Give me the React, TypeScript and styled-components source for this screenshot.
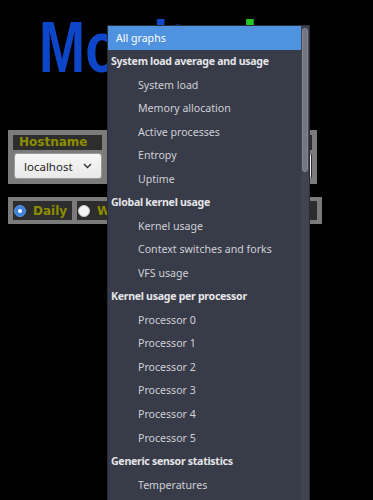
import React from "react";
import styled, { createGlobalStyle } from "styled-components";

const GlobalStyle = createGlobalStyle`
  html, body {
    margin: 0;
    padding: 0;
    background: #000000;
    overflow: hidden;
  }
  body {
    font-family: "DejaVu Sans", sans-serif;
  }
`;

const Page = styled.div`
  position: relative;
  width: 373px;
  height: 500px;
  overflow: hidden;
  background: #000000;
  padding-top: 11px;
  box-sizing: border-box;
`;

const Title = styled.h1`
  margin: 0 0 0 39px;
  height: 72px;
  font-family: "Liberation Sans", Arial, sans-serif;
  font-weight: 700;
  font-size: 72px;
  line-height: 72px;
  color: #0d46c8;
  white-space: nowrap;
  transform: scaleX(0.77);
  transform-origin: left top;
`;

const Accent = styled.span`
  color: #22c522;
`;

const Panel = styled.div<{ $top: number; $width: number; $py: number }>`
  margin: ${(p) => p.$top}px 0 0 8px;
  width: ${(p) => p.$width}px;
  box-sizing: border-box;
  padding: ${(p) => p.$py}px 5px;
  background: #7b7b7b;
  display: flex;
  gap: 5px;
`;

const Column = styled.div<{ $width?: number }>`
  display: flex;
  flex-direction: column;
  gap: 3px;
  width: ${(p) => (p.$width ? `${p.$width}px` : "auto")};
  flex: ${(p) => (p.$width ? "none" : "1")};
`;

const Label = styled.div`
  height: 15px;
  background: #2d2d2d;
  color: #8d8d00;
  font-family: "DejaVu Sans", sans-serif;
  font-weight: 700;
  font-size: 12px;
  line-height: 15px;
  padding-left: 6px;
`;

const SelectBox = styled.div<{ $hidden?: boolean }>`
  height: 26px;
  margin-left: 1px;
  box-sizing: border-box;
  border: 1px solid #9a9a9a;
  border-radius: 3px;
  background: linear-gradient(#f6f6f6, #e9e9e9);
  display: flex;
  align-items: center;
  justify-content: space-between;
  padding: 0 9px 0 9px;
  font-family: "Noto Sans", sans-serif;
  font-size: 11.5px;
  color: #222222;
  border-right-color: ${(p) => (p.$hidden ? "#2e2e2e" : "#9a9a9a")};
`;

const RadioCell = styled.label<{ $grow?: boolean }>`
  height: 19px;
  background: #2d2d2d;
  display: flex;
  align-items: center;
  gap: 7px;
  padding: 0 5px 0 1px;
  flex: ${(p) => (p.$grow ? "1" : "none")};
  color: #8d8d00;
  font-family: "DejaVu Sans", sans-serif;
  font-weight: 700;
  font-size: 12px;
`;

const RadioDot = styled.span<{ $checked?: boolean }>`
  width: 12px;
  height: 12px;
  border-radius: 50%;
  box-sizing: border-box;
  flex: none;
  position: relative;
  background: ${(p) => (p.$checked ? "#3f82dc" : "#f5f5f5")};
  border: 1px solid ${(p) => (p.$checked ? "#5b95e0" : "#c9c9c9")};
  &::after {
    content: "";
    display: ${(p) => (p.$checked ? "block" : "none")};
    position: absolute;
    left: 3px;
    top: 3px;
    width: 4px;
    height: 4px;
    border-radius: 50%;
    background: #ffffff;
  }
`;

const Menu = styled.div`
  position: absolute;
  left: 107px;
  top: 25px;
  width: 203px;
  height: 480px;
  box-sizing: border-box;
  border: 1px solid #2a2c35;
  background: #383b48;
  display: flex;
  z-index: 10;
`;

const List = styled.ul`
  list-style: none;
  margin: 0;
  padding: 0;
  flex: 1;
  font-family: "Noto Sans", sans-serif;
  font-size: 10.6px;
`;

const Item = styled.li<{ $kind: "top" | "group" | "child"; $active?: boolean }>`
  height: 23.53px;
  display: flex;
  align-items: center;
  white-space: nowrap;
  padding-left: ${(p) => (p.$kind === "top" ? 8 : p.$kind === "group" ? 3 : 30)}px;
  font-weight: ${(p) => (p.$kind === "group" ? 700 : 400)};
  letter-spacing: ${(p) => (p.$kind === "group" ? "-0.3px" : "0")};
  color: ${(p) => (p.$active ? "#ffffff" : p.$kind === "group" ? "#e4e5e8" : "#cfd1d7")};
  background: ${(p) => (p.$active ? "#4f92e0" : "transparent")};
`;

const Track = styled.div`
  width: 8px;
  background: #41444f;
  padding: 2px 1px 0 1px;
  box-sizing: border-box;
`;

const Thumb = styled.div`
  height: 144px;
  border-radius: 3px;
  background: #727684;
  border: 1px solid #838794;
  box-sizing: border-box;
`;

const Chevron = () => (
  <svg width="9" height="6" viewBox="0 0 9 6">
    <polyline points="1,1 4.5,4.5 8,1" fill="none" stroke="#333" strokeWidth="1.4" />
  </svg>
);

type Entry = { text: string; kind: "top" | "group" | "child"; active?: boolean };

const entries: Entry[] = [
  { text: "All graphs", kind: "top", active: true },
  { text: "System load average and usage", kind: "group" },
  { text: "System load", kind: "child" },
  { text: "Memory allocation", kind: "child" },
  { text: "Active processes", kind: "child" },
  { text: "Entropy", kind: "child" },
  { text: "Uptime", kind: "child" },
  { text: "Global kernel usage", kind: "group" },
  { text: "Kernel usage", kind: "child" },
  { text: "Context switches and forks", kind: "child" },
  { text: "VFS usage", kind: "child" },
  { text: "Kernel usage per processor", kind: "group" },
  { text: "Processor 0", kind: "child" },
  { text: "Processor 1", kind: "child" },
  { text: "Processor 2", kind: "child" },
  { text: "Processor 3", kind: "child" },
  { text: "Processor 4", kind: "child" },
  { text: "Processor 5", kind: "child" },
  { text: "Generic sensor statistics", kind: "group" },
  { text: "Temperatures", kind: "child" },
];

const periods = ["Daily", "Weekly", "Monthly", "Yearly"];

export default function App() {
  return (
    <>
      <GlobalStyle />
      <Page>
        <Title>
          Monitor<Accent>ix</Accent>
        </Title>
        <Panel $top={47} $width={309} $py={5}>
          <Column $width={89}>
            <Label>Hostname</Label>
            <SelectBox>
              <span>localhost</span>
              <Chevron />
            </SelectBox>
          </Column>
          <Column>
            <Label>Graph</Label>
            <SelectBox $hidden>
              <span>All graphs</span>
              <Chevron />
            </SelectBox>
          </Column>
        </Panel>
        <Panel $top={13} $width={314} $py={4}>
          {periods.map((p, i) => (
            <RadioCell key={p} $grow={i === periods.length - 1}>
              <RadioDot $checked={i === 0} />
              {p}
            </RadioCell>
          ))}
        </Panel>
        <Menu>
          <List>
            {entries.map((e) => (
              <Item key={e.text} $kind={e.kind} $active={e.active}>
                {e.text}
              </Item>
            ))}
          </List>
          <Track>
            <Thumb />
          </Track>
        </Menu>
      </Page>
    </>
  );
}
